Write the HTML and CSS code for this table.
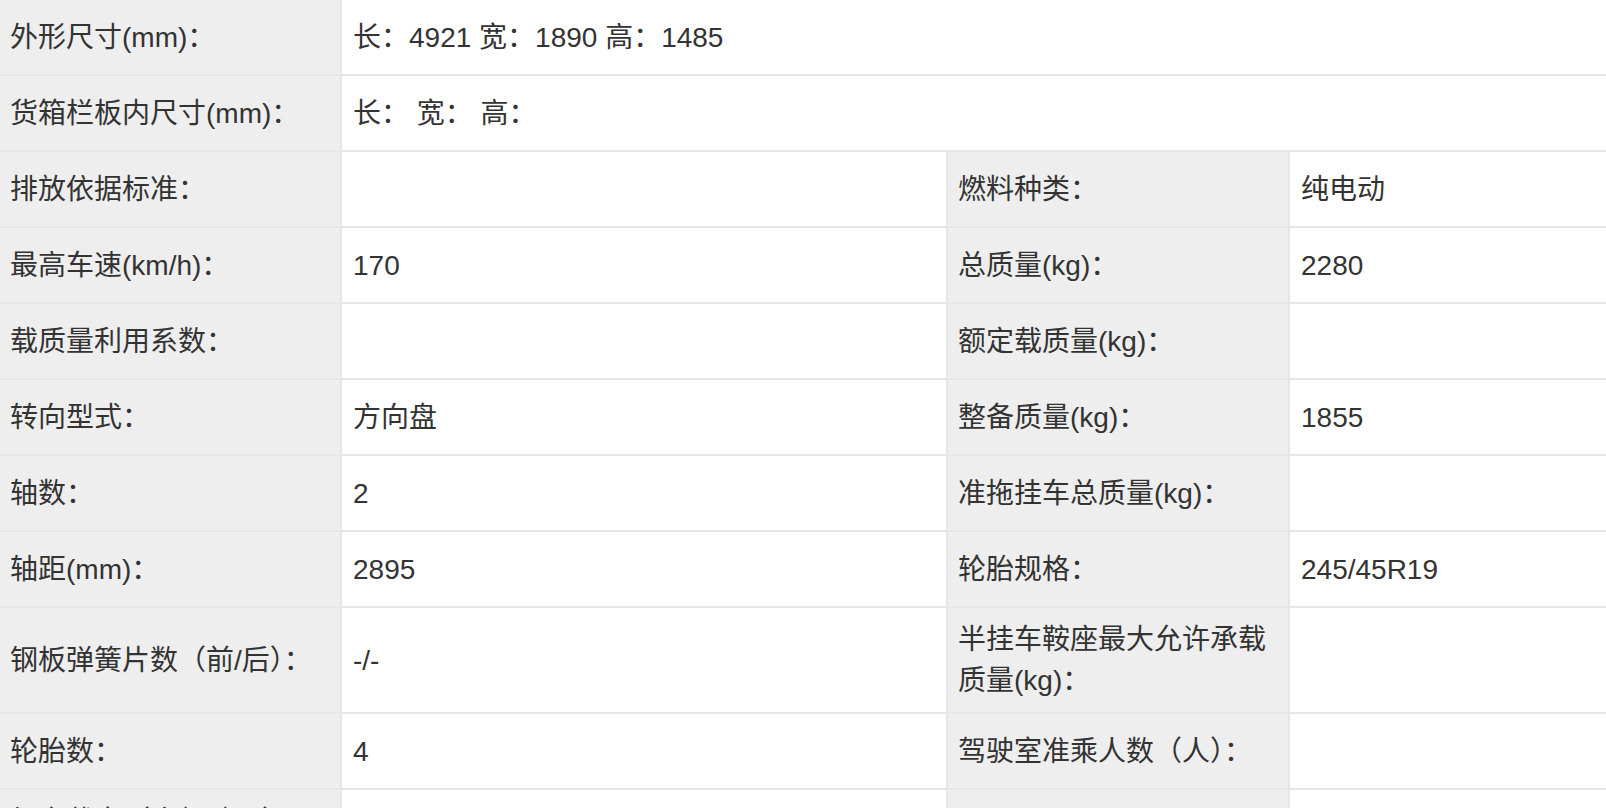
FILE: index.html
```html
<!DOCTYPE html>
<html lang="zh-CN">
<head>
<meta charset="utf-8">
<title>车辆参数</title>
<link rel="stylesheet" href="styles.css">
</head>
<body>
<div class="spec">
  <div class="label">外形尺寸(mm)：</div>
  <div class="value wide">长：4921 宽：1890 高：1485</div>

  <div class="label">货箱栏板内尺寸(mm)：</div>
  <div class="value wide">长： 宽： 高：</div>

  <div class="label">排放依据标准：</div>
  <div class="value"></div>
  <div class="label">燃料种类：</div>
  <div class="value">纯电动</div>

  <div class="label">最高车速(km/h)：</div>
  <div class="value">170</div>
  <div class="label">总质量(kg)：</div>
  <div class="value">2280</div>

  <div class="label">载质量利用系数：</div>
  <div class="value"></div>
  <div class="label">额定载质量(kg)：</div>
  <div class="value"></div>

  <div class="label">转向型式：</div>
  <div class="value">方向盘</div>
  <div class="label">整备质量(kg)：</div>
  <div class="value">1855</div>

  <div class="label">轴数：</div>
  <div class="value">2</div>
  <div class="label">准拖挂车总质量(kg)：</div>
  <div class="value"></div>

  <div class="label">轴距(mm)：</div>
  <div class="value">2895</div>
  <div class="label">轮胎规格：</div>
  <div class="value">245/45R19</div>

  <div class="label">钢板弹簧片数（前/后）：</div>
  <div class="value">-/-</div>
  <div class="label">半挂车鞍座最大允许承载质量(kg)：</div>
  <div class="value"></div>

  <div class="label">轮胎数：</div>
  <div class="value">4</div>
  <div class="label">驾驶室准乘人数（人）：</div>
  <div class="value"></div>

  <div class="label">额定载客（含驾驶员）（座位数）：</div>
  <div class="value">5</div>
  <div class="label">前悬/后悬(mm)：</div>
  <div class="value"></div>
</div>
</body>
</html>
```
FILE: styles.css
```css
html, body {
  margin: 0;
  padding: 0;
  background: #ffffff;
}

body {
  font-family: "Liberation Sans", "Noto Sans CJK SC", sans-serif;
  font-size: 28px;
  line-height: 41px;
  color: #333333;
}

.spec {
  display: grid;
  grid-template-columns: 340px 604px 340px 316px;
  grid-auto-rows: minmax(74px, auto);
  gap: 2px;
  background: #e6e6e6;
  width: 1606px;
}

.label,
.value {
  display: flex;
  align-items: center;
  box-sizing: border-box;
  padding: 11px 12px 11px 10px;
}

.label {
  background: #eeeeee;
}

.value {
  background: #ffffff;
  padding-left: 11px;
}

.wide {
  grid-column: span 3;
}
```
